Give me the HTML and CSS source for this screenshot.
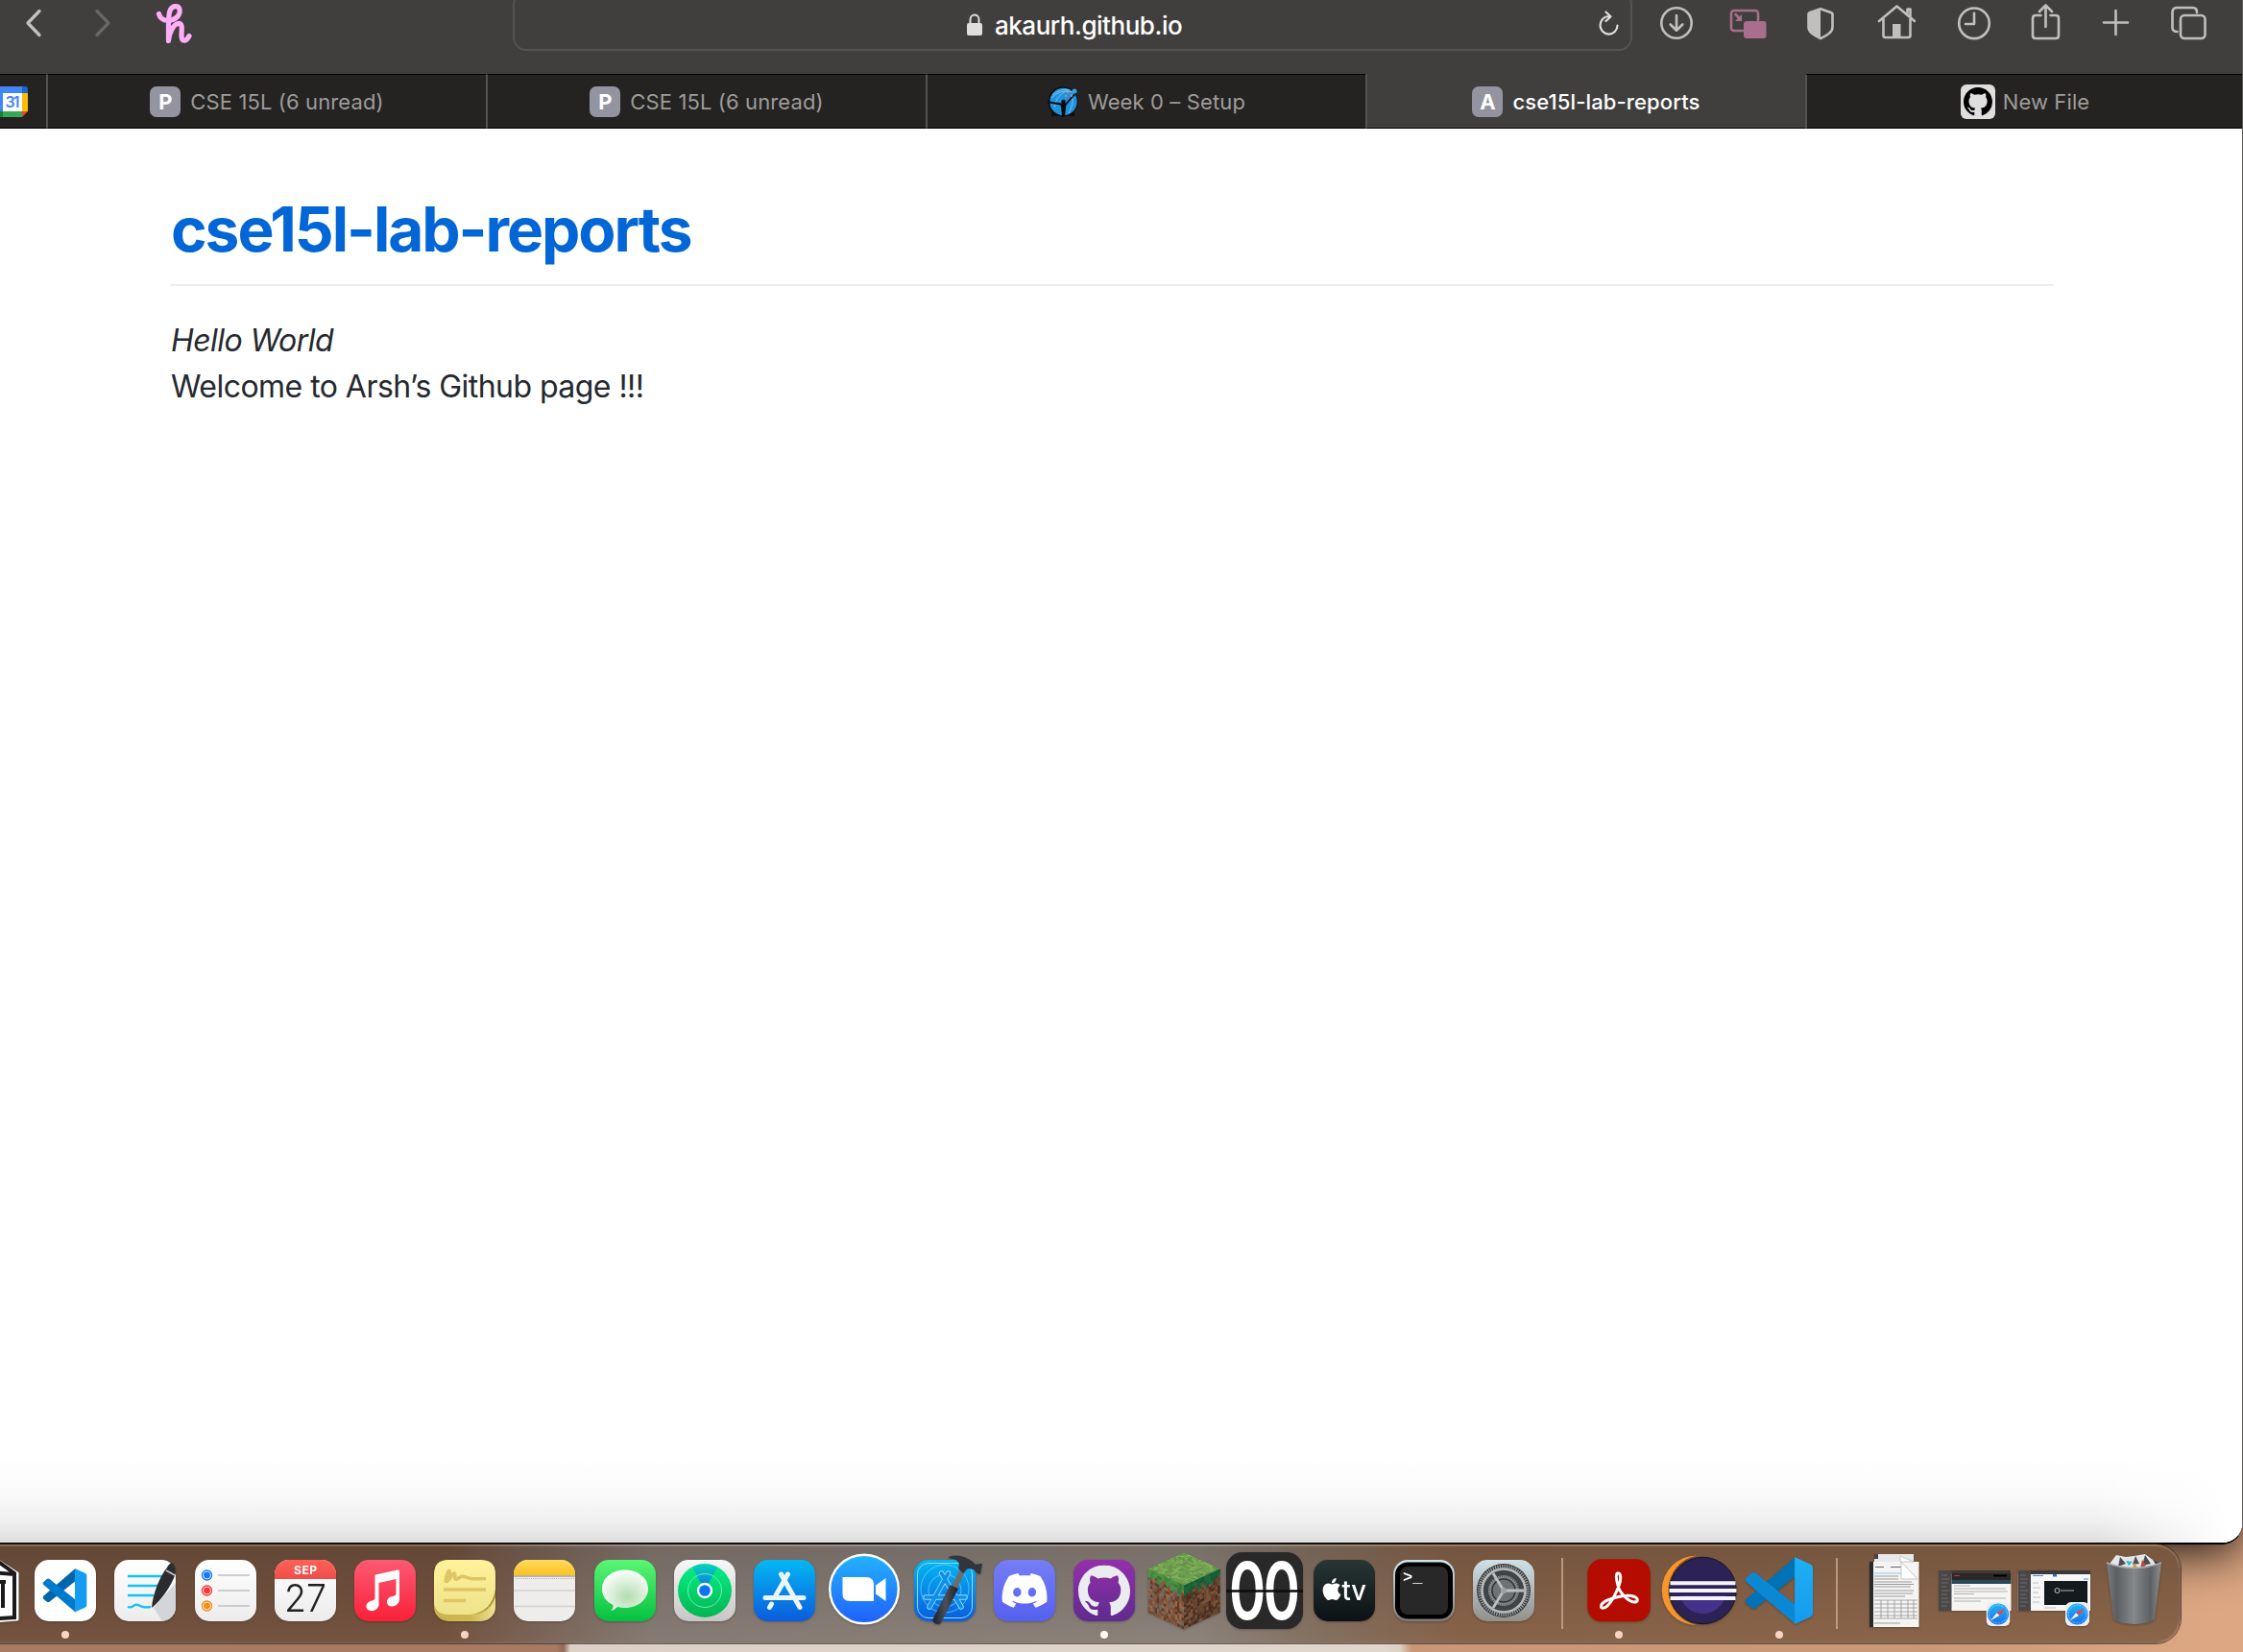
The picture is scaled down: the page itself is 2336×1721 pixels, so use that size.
FILE: index.html
```html
<!DOCTYPE html>
<html lang="en">
<head>
<meta charset="utf-8">
<title>cse15l-lab-reports</title>
<link rel="stylesheet" href="styles.css">
</head>
<body>
<svg class="defs" width="0" height="0">
  <defs>
    <symbol id="octocat" viewBox="0 0 16 16"><path d="M8 0C3.58 0 0 3.58 0 8c0 3.54 2.29 6.53 5.47 7.59.4.07.55-.17.55-.38 0-.19-.01-.82-.01-1.49-2.01.37-2.53-.49-2.69-.94-.09-.23-.48-.94-.82-1.13-.28-.15-.68-.52-.01-.53.63-.01 1.08.58 1.23.82.72 1.21 1.87.87 2.33.66.07-.52.28-.87.51-1.07-1.78-.2-3.64-.89-3.64-3.95 0-.87.31-1.59.82-2.15-.08-.2-.36-1.02.08-2.12 0 0 .67-.21 2.2.82.64-.18 1.32-.27 2-.27.68 0 1.36.09 2 .27 1.53-1.04 2.2-.82 2.2-.82.44 1.1.16 1.92.08 2.12.51.56.82 1.27.82 2.15 0 3.07-1.87 3.75-3.65 3.95.29.25.54.73.54 1.48 0 1.07-.01 1.93-.01 2.2 0 .21.15.46.55.38A8.013 8.013 0 0016 8c0-4.42-3.58-8-8-8z"/></symbol>
    <symbol id="safari" viewBox="0 0 24 24"><rect width="24" height="24" rx="5.5" fill="#eceef0"/><circle cx="12" cy="12" r="10.6" fill="url(#g-safari)"/><circle cx="12" cy="12" r="9" fill="none" stroke="#bfe4ff" stroke-width="1" stroke-dasharray=".5 1"/><path d="M19.5 5.5 13.4 13.4 10.6 10.8z" fill="#f4403a"/><path d="M4.5 18.5 10.6 10.8 13.4 13.4z" fill="#f2f2f2"/></symbol>
    <linearGradient id="g-safari" x2="0" y2="1"><stop stop-color="#1fb6fa"/><stop offset="1" stop-color="#1b70ea"/></linearGradient>
    <linearGradient id="g-paper" x2="0" y2="1"><stop stop-color="#fff"/><stop offset="1" stop-color="#ececec"/></linearGradient>
    <linearGradient id="g-cal" x2="0" y2="1"><stop stop-color="#ff6058"/><stop offset="1" stop-color="#ee4e48"/></linearGradient>
    <linearGradient id="g-music" x2="0" y2="1"><stop stop-color="#fc5a73"/><stop offset="1" stop-color="#fa2038"/></linearGradient>
    <linearGradient id="g-sticky" x2="0" y2="1"><stop stop-color="#fff29a"/><stop offset="1" stop-color="#ede38a"/></linearGradient>
    <linearGradient id="g-sticky2"><stop stop-color="#c9b44a"/><stop offset=".6" stop-color="#cdb950"/><stop offset="1" stop-color="#efe292"/></linearGradient>
    <linearGradient id="g-notes" x2="0" y2="1"><stop stop-color="#ffdb5c"/><stop offset="1" stop-color="#fdc021"/></linearGradient>
    <linearGradient id="g-msg" x2="0" y2="1"><stop stop-color="#5bf675"/><stop offset="1" stop-color="#04c13f"/></linearGradient>
    <radialGradient id="g-bubble" cx=".55" cy=".65" r=".65"><stop stop-color="#b4dcb0"/><stop offset="1" stop-color="#fdfffd"/></radialGradient>
    <linearGradient id="g-silver" x2="0" y2="1"><stop stop-color="#f8f8f8"/><stop offset="1" stop-color="#c8c6c5"/></linearGradient>
    <linearGradient id="g-find" x2="0" y2="1"><stop stop-color="#04f088"/><stop offset="1" stop-color="#04b552"/></linearGradient>
    <linearGradient id="g-beam" x2="0" y2="1"><stop stop-color="#08d7b4"/><stop offset="1" stop-color="#0668f6"/></linearGradient>
    <linearGradient id="g-store" x2="0" y2="1"><stop stop-color="#04b8f3"/><stop offset="1" stop-color="#0a5cdc"/></linearGradient>
    <linearGradient id="g-zoom" x2="0" y2="1"><stop stop-color="#23b3ff"/><stop offset="1" stop-color="#2060fb"/></linearGradient>
    <linearGradient id="g-discord" x2="0" y2="1"><stop stop-color="#757ef6"/><stop offset="1" stop-color="#5560f0"/></linearGradient>
    <linearGradient id="g-github" x2="0" y2="1"><stop stop-color="#9430ab"/><stop offset="1" stop-color="#5f2b8e"/></linearGradient>
    <linearGradient id="g-tv" x2="0" y2="1"><stop stop-color="#283634"/><stop offset="1" stop-color="#0c1115"/></linearGradient>
    <linearGradient id="g-term" x2="0" y2="1"><stop stop-color="#d2e6ef"/><stop offset="1" stop-color="#7d7b7c"/></linearGradient>
    <linearGradient id="g-gear" x2="0" y2="1"><stop stop-color="#d0e0e8"/><stop offset="1" stop-color="#929089"/></linearGradient>
    <linearGradient id="g-code" x2="0" y2="1"><stop stop-color="#1fb0f2"/><stop offset="1" stop-color="#149af0"/></linearGradient>
    <linearGradient id="g-bin"><stop stop-color="#7b7e80"/><stop offset=".18" stop-color="#5b5f62"/><stop offset=".5" stop-color="#84888a"/><stop offset=".8" stop-color="#5d6164"/><stop offset="1" stop-color="#8c8f91"/></linearGradient>
    <linearGradient id="g-handle"><stop stop-color="#1d2026"/><stop offset=".5" stop-color="#4a4f59"/><stop offset="1" stop-color="#1d2026"/></linearGradient>
    <clipPath id="tile"><rect x="8" y="8" width="64" height="64" rx="15"/></clipPath>
  </defs>
</svg>

<main class="window">
  <header class="toolbar">
    <svg class="nav back" width="20" height="32" viewBox="0 0 20 32"><path d="M16 3.500 4 16l12 12.500"/></svg>
    <svg class="nav forward" width="20" height="32" viewBox="0 0 20 32"><path d="M4 3.500 16 16 4 28.500"/></svg>
    <svg class="honey" width="40" height="44" viewBox="0 0 40 44"><path d="M4.500 11.500C6 18 13 19.500 19 17.500 25 15.500 27 10 26 6.500 25 2.500 19 2.500 16.500 7 14.500 11 14.500 17 14.500 24V39.500C15 33 19 22.500 24.500 21.500 30 21 28 29 28 34 28 41 33 40.500 36 34.500"/></svg>
    <div class="address">
      <svg class="lock" width="18" height="26" viewBox="0 0 18 26"><path d="M4.500 12V7.500a4.500 5 0 0 1 9 0V12" fill="none" stroke="#dededd" stroke-width="2"/><rect x="1" y="11" width="16" height="13" rx="2" fill="#dededd"/></svg>
      <span class="url">akaurh.github.io</span>
      <svg class="reload" width="26" height="28" viewBox="0 0 26 28"><path d="M13.500 6A9 9.300 0 1 0 22.500 15.500M10.500 1.500 15.500 6.200 10.500 11"/></svg>
    </div>
    <div class="actions">
      <svg class="a1" viewBox="0 0 40 40"><circle cx="20" cy="20" r="15.700"/><path d="M20 12v15M13.700 21.500 20 27.700l6.300-6.200"/></svg>
      <svg class="a2 pip" viewBox="0 0 40 40"><path d="M14 28H5a3 3 0 0 1-3-3V10a3 3 0 0 1 3-3h22a3 3 0 0 1 3 3v7M6.500 11l5 5"/><path class="solid" d="M13 11v7H6z"/><rect class="solid" x="15" y="18" width="23.500" height="18" rx="3"/></svg>
      <svg class="a3" viewBox="0 0 40 40"><path d="M20 5.200 31.500 9.300q1 .3 1 1.500V24c0 5-4 8-12.500 12C11.500 32 7.500 29 7.500 24V10.800q0-1.200 1-1.500z"/><path class="solid" d="M20 5.200V36C11.500 32 7.500 29 7.500 24V10.800q0-1.200 1-1.500z"/></svg>
      <svg class="a4" viewBox="0 0 40 40"><path d="M2 18 20.500 2.500 39 18M6.500 16v17q0 2 2 2h24q2 0 2-2V16M31.500 11V5.500h3V14"/><path class="solid" d="M16 21h8.500v14h-8.500z"/></svg>
      <svg class="a5" viewBox="0 0 40 40"><circle cx="20" cy="20.300" r="15.800"/><path d="M20 9.700V21H11"/></svg>
      <svg class="a6" viewBox="0 0 40 40"><path d="M14.500 12H9q-3 0-3 3v18q0 3 3 3h21q3 0 3-3V15q0-3-3-3H24.500M19.500 24V2M13 8 19.500 1.500 26 8"/></svg>
      <svg class="a7" viewBox="0 0 40 40"><path d="M19.500 7v25M7 19.500h25"/></svg>
      <svg class="a8" viewBox="0 0 40 40"><rect x="12" y="12" width="25.500" height="24" rx="4"/><path d="M8.500 29q-5 0-5-4V8.500q0-4.500 5-4.500h16q4.500 0 4.500 5"/></svg>
    </div>
  </header>

  <nav class="tabs">
    <div class="tab pinned">
      <svg width="29" height="32" viewBox="0 0 29 32"><path fill="#4285f4" d="M0 0h23v7H0z"/><path fill="#1967d2" d="M23 0h3q3 0 3 3v4h-6z"/><path fill="#fbbc04" d="M23 7h6v19h-6z"/><path fill="#34a853" d="M0 26h23v6H0z"/><path fill="#188038" d="M0 26h3v6H0z"/><path fill="#4285f4" d="M0 7h3v19H0z"/><path fill="#fff" d="M3 7h20v19H3z"/><path fill="#ea4335" d="M23 26h6l-6 6z"/><text x="5.500" y="22.300" class="cal31" textLength="15">31</text></svg>
    </div>
    <div class="tab"><span class="letter">P</span><span class="label">CSE 15L (6 unread)</span></div>
    <div class="tab"><span class="letter">P</span><span class="label">CSE 15L (6 unread)</span></div>
    <div class="tab">
      <svg width="32" height="32" viewBox="0 0 32 32"><circle cx="16" cy="16" r="15.700" fill="#0b0f13"/><path d="M4 25h24v6H4z" fill="#0b0f13"/><circle cx="16.500" cy="16" r="14.200" fill="#2192dc"/><path d="M4 12Q14 2 27 6M5 9q10-8 18-5M7 22Q8 10 21 4M22 28q6-10 3-20" fill="none" stroke="#76c3f0" stroke-width="1"/><path d="M1.500 16.500 14 18.500 19 18.500 27.500 9" fill="none" stroke="#080b0e" stroke-width="1.800" stroke-linecap="round"/><circle cx="16.500" cy="16" r="2.300" fill="#080b0e"/><path d="M13.500 18h6l-1.500 13h-3z" fill="#080b0e"/><circle cx="28" cy="5" r="2.500" fill="#36a3e4"/><g fill="#e88468"><circle cx="21" cy="6" r="1"/><circle cx="19" cy="10" r="1"/><circle cx="25" cy="10" r="1"/></g></svg>
      <span class="label">Week 0 – Setup</span></div>
    <div class="tab active"><span class="letter">A</span><span class="label">cse15l-lab-reports</span></div>
    <div class="tab file"><span class="ghbox"><svg width="30" height="30"><use href="#octocat"/></svg></span><span class="label">New File</span></div>
  </nav>

  <article class="page">
    <h1><a>cse15l-lab-reports</a></h1>
    <p><em>Hello World</em><br>Welcome to Arsh’s Github page !!!</p>
  </article>
</main>

<footer class="dock">
  <div class="slot"><svg viewBox="0 0 80 80"><path d="M8 20 50 7 73 22V70L20 74z" fill="#fff" stroke="#fff" stroke-width="3" stroke-linejoin="round"/><path d="M20 14 52 9 70 22V68L20 71M54 10 44 21 70 23M44 21H20M58 31V58M53 31h8" fill="none" stroke="#1b1b1b" stroke-width="4"/></svg></div>
  <div class="slot run"><svg viewBox="0 0 80 80"><rect x="8" y="8" width="64" height="64" rx="15" fill="#fff"/><g transform="translate(16.700 17) scale(.456)"><path fill="#0065a9" d="M74 0 75 28 15 76q-3 2-6 0L1 69q-2-3 0-6z"/><path fill="#007acc" d="M74 100 75 72 15 24q-3-2-6 0L1 31q-2 3 0 6z"/><path fill="#149cf0" d="M73 0 97 11q3 2 3 5V84q0 3-3 5L73 100z"/></g></svg></div>
  <div class="slot"><svg viewBox="0 0 80 80"><rect x="8" y="8" width="64" height="64" rx="15" fill="url(#g-paper)"/><path d="M49 58 72 32v26q0 14-14 14z" fill="#d3d6d8" clip-path="url(#tile)"/><path d="M22 25h37M22 35h31M22 45h27M22 57c5 2 7-4 11-2s5 3 13 2" fill="none" stroke="#13c2f5" stroke-width="2.300"/><path d="M47 58c1-14 8-32 16-42q3-6 6-4 3 3 3 10C67 36 57 50 47 58z" fill="#2b2c2e"/><path d="m62 19 9 5" stroke="#bfc2c5" stroke-width="2"/></svg></div>
  <div class="slot"><svg viewBox="0 0 80 80"><rect x="8" y="8" width="64" height="64" rx="15" fill="url(#g-paper)"/><path d="M32 24h33M32 40h33M32 56h33" stroke="#bfc0c3" stroke-width="1.600"/><g stroke-width="1.400" fill="#fff"><circle cx="20.500" cy="24" r="5" stroke="#1579f2"/><circle cx="20.500" cy="40" r="5" stroke="#f33a35"/><circle cx="20.500" cy="56" r="5" stroke="#f38c1b"/></g><circle cx="20.500" cy="24" r="3.400" fill="#1579f2"/><circle cx="20.500" cy="40" r="3.400" fill="#f33a35"/><circle cx="20.500" cy="56" r="3.400" fill="#f38c1b"/></svg></div>
  <div class="slot"><svg viewBox="0 0 80 80"><rect x="8" y="8" width="64" height="64" rx="15" fill="url(#g-paper)"/><path d="M8 8h64v20H8z" fill="url(#g-cal)" clip-path="url(#tile)"/><text x="28" y="23" class="sep-text" textLength="24">SEP</text><text x="18" y="62" class="day" textLength="44" lengthAdjust="spacingAndGlyphs">27</text></svg></div>
  <div class="slot"><svg viewBox="0 0 80 80"><rect x="8" y="8" width="64" height="64" rx="15" fill="url(#g-music)"/><path d="M30 23.500 53 18.500q2-.5 2 1.500V49c0 4-3 7-7.500 7.500-3 .3-5.500-1.500-5.500-4.500 0-4 3-5.500 6-6 2.500-.5 3.500-1 3.500-3.500V28L33.500 32V54c0 4-3 7-7.500 7.200-3 0-5.500-1.700-5.500-4.700 0-3.500 3-5.200 6-6 2.500-.5 3-1.500 3-3.500V25.500q0-1.500.5-2z" fill="#fff"/></svg></div>
  <div class="slot run"><svg viewBox="0 0 80 80"><rect x="8" y="12" width="64" height="60" rx="15" fill="url(#g-sticky2)"/><path d="M23 8h34q15 0 15 15v15C70 54 62 63 45 65H23q-15 0-15-15V23Q8 8 23 8z" fill="url(#g-sticky)"/><path d="M48 65C63 62 70 52 72 38v9C68 58 60 64 48 65z" fill="#a99536"/><path d="M20 27c7-5 4-11 2-5s-3 11 1 7c3-3 4-7 6-7s-1 8 3 6 4-4 9-2 6 2 21 1.500M18 39h44M18 50.500h23" fill="none" stroke="#dfc566" stroke-width="3.500"/></svg></div>
  <div class="slot"><svg viewBox="0 0 80 80"><rect x="8" y="8" width="64" height="64" rx="15" fill="#efedeb"/><path d="M8 8h64v16H8z" fill="url(#g-notes)" clip-path="url(#tile)"/><path d="M8 25h64" stroke="#a5a39d" stroke-width="1.400"/><path d="M10 27.500h62" stroke="#b8b6b2" stroke-width="1" stroke-dasharray="1 1"/><path d="M8 40h64M8 56.500h64" stroke="#d3d2d2" stroke-width="1.500"/></svg></div>
  <div class="slot"><svg viewBox="0 0 80 80"><rect x="8" y="8" width="64" height="64" rx="15" fill="url(#g-msg)"/><path d="M40 18.500c13.500 0 24 8.500 24 19.500S53.500 58 40 58q-4 0-8-1-3 3.500-7 4 3-2.500 2.500-6C20 51.500 16 45.500 16 38c0-11 10.500-19.500 24-19.500z" fill="url(#g-bubble)"/></svg></div>
  <div class="slot"><svg viewBox="0 0 80 80"><rect x="8" y="8" width="64" height="64" rx="15" fill="url(#g-silver)"/><circle cx="40" cy="40" r="28" fill="url(#g-find)"/><path d="M40 40 27 15.500Q40 9 53 15.500z" fill="url(#g-beam)"/><circle cx="40" cy="40" r="17.500" fill="none" stroke="#6cf0b0" stroke-width="1"/><circle cx="40" cy="40" r="7" fill="#0b74f2" stroke="#fff" stroke-width="2.300"/></svg></div>
  <div class="slot"><svg viewBox="0 0 80 80"><rect x="8" y="8" width="64" height="64" rx="15" fill="url(#g-store)"/><path d="M43.500 23 31 45M36.500 23 56 57.500M26.500 54l-2 3.500M20 47.500h40" stroke="#edf5fc" stroke-width="5" stroke-linecap="round"/></svg></div>
  <div class="slot"><svg viewBox="0 0 80 80"><circle cx="40" cy="38.500" r="35.800" fill="url(#g-zoom)" stroke="#fff" stroke-width="2.400"/><path d="M17.500 26H42q8 0 8 7.500V51H25q-7.500 0-7.500-7zM52 34.500 62.500 27v24L52 43.500z" fill="#fff"/></svg></div>
  <div class="slot"><svg viewBox="0 0 80 80"><rect x="8" y="8" width="64" height="64" rx="15" fill="url(#g-store)"/><g fill="none" stroke="#8fdcff"><rect x="11.500" y="11.500" width="57" height="57" rx="11.500"/><circle cx="40" cy="38" r="25" stroke-width=".6"/><circle cx="40" cy="40" r="17" stroke-width=".6"/><path d="M43.500 22 24 57M36.500 22 57 57M20 47h41" stroke-width="5.500" stroke-linecap="round"/></g><path d="M43.500 22 24 57M36.500 22 57 57M20 47h41" stroke="#0f8fea" stroke-width="3.700" stroke-linecap="round"/><path d="M56 17 61 20 53 38 47 36z" fill="#6b6d72"/><path d="M45.500 34 54 38 36 74q-3 3-8-1-1-2 0-4z" fill="url(#g-handle)"/><path d="M44 5q10-4 22 3 4 2 6 5 3-1 7-1l-2 11q-5-1-7-5l-6-1-5 5-5-5Q58 8 44 6z" fill="#33353b"/></svg></div>
  <div class="slot"><svg viewBox="0 0 80 80"><rect x="8" y="8" width="64" height="64" rx="15" fill="url(#g-discord)"/><path transform="translate(16.700 16.500) scale(1.950)" fill="#fff" d="M20.317 4.370a19.791 19.791 0 00-4.885-1.515.074.074 0 00-.079.037c-.211.375-.445.865-.608 1.250-1.845-.276-3.680-.276-5.487 0-.164-.393-.406-.874-.618-1.250a.077.077 0 00-.079-.037 19.736 19.736 0 00-4.885 1.515.070.070 0 00-.032.028C.533 9.046-.319 13.580.099 18.058a.082.082 0 00.031.056c2.053 1.508 4.041 2.423 5.993 3.029a.078.078 0 00.084-.028c.462-.630.873-1.295 1.226-1.994a.076.076 0 00-.042-.106c-.653-.248-1.274-.550-1.872-.892a.077.077 0 01-.008-.128c.126-.094.252-.192.372-.291a.074.074 0 01.078-.011c3.928 1.793 8.180 1.793 12.061 0a.074.074 0 01.079.010c.120.099.246.198.373.292a.077.077 0 01-.007.128 12.299 12.299 0 01-1.873.891.077.077 0 00-.041.107c.360.698.772 1.363 1.225 1.993a.076.076 0 00.084.029c1.961-.607 3.950-1.522 6.002-3.029a.077.077 0 00.031-.055c.500-5.177-.838-9.674-3.549-13.660a.061.061 0 00-.031-.029zM8.020 15.331c-1.183 0-2.157-1.086-2.157-2.419s.956-2.419 2.157-2.419c1.211 0 2.176 1.095 2.157 2.419 0 1.333-.956 2.419-2.157 2.419zm7.975 0c-1.183 0-2.157-1.086-2.157-2.419s.955-2.419 2.157-2.419c1.211 0 2.176 1.095 2.157 2.419 0 1.333-.946 2.419-2.157 2.419z"/></svg></div>
  <div class="slot run bright"><svg viewBox="0 0 80 80"><rect x="8" y="8" width="64" height="64" rx="15" fill="url(#g-github)"/><use href="#octocat" x="13" y="13.500" width="54" height="54" fill="#ebecf0"/></svg></div>
  <div class="slot"><svg id="block" viewBox="0 0 80 80"></svg></div>
  <div class="slot"><svg viewBox="0 0 80 80"><rect width="80" height="80" rx="17" fill="#292929"/><text class="flip" transform="translate(3 70.300) scale(.700 1)" textLength="106">00</text><path d="M0 40.500h80" stroke="#0c0c0c" stroke-width="2.400"/></svg></div>
  <div class="slot"><svg viewBox="0 0 80 80"><rect x="8" y="8" width="64" height="64" rx="15" fill="url(#g-tv)"/><path transform="translate(15.500 27) scale(.960)" fill="#fff" d="M12.152 6.896c-.948 0-2.415-1.078-3.960-1.040-2.040.027-3.910 1.183-4.961 3.014-2.117 3.675-.546 9.103 1.519 12.090 1.013 1.454 2.208 3.090 3.792 3.039 1.520-.065 2.090-.987 3.935-.987 1.831 0 2.350.987 3.960.948 1.637-.026 2.676-1.480 3.676-2.948 1.156-1.688 1.636-3.325 1.662-3.415-.039-.013-3.182-1.221-3.220-4.857-.026-3.040 2.480-4.494 2.597-4.559-1.429-2.090-3.623-2.324-4.390-2.376-2-.156-3.675 1.090-4.610 1.090zM15.530 3.830c.843-1.012 1.400-2.427 1.245-3.830-1.207.052-2.662.805-3.532 1.818-.780.896-1.454 2.338-1.273 3.714 1.338.104 2.715-.688 3.559-1.701"/><text x="37.500" y="50" class="tv" textLength="25.500" lengthAdjust="spacingAndGlyphs">tv</text></svg></div>
  <div class="slot"><svg viewBox="0 0 80 80"><rect x="8" y="8" width="64" height="64" rx="15" fill="url(#g-term)"/><rect x="10" y="10.500" width="60" height="59" rx="13" fill="#000"/><rect x="15" y="15" width="50" height="50" rx="8" fill="#282828"/><text x="18" y="31" class="prompt">&gt;_</text></svg></div>
  <div class="slot"><svg viewBox="0 0 80 80"><rect x="8" y="8" width="64" height="64" rx="15" fill="url(#g-gear)"/><circle cx="40" cy="40" r="28" fill="#34383a"/><circle cx="40" cy="40" r="25" fill="none" stroke="#9da1a2" stroke-width="4" stroke-dasharray="1.200 1.200"/><circle cx="40" cy="40" r="22.500" fill="#3f4446" stroke="#b7bbbc" stroke-width="2.600"/><circle cx="40" cy="40" r="14.500" fill="#676b6c" stroke="#909495" stroke-width="3" stroke-dasharray="1.500 .8"/><circle cx="40" cy="40" r="12" fill="#6f7273" stroke="#303436" stroke-width="1.500"/><path d="M40 40H61M40 40 29 22M40 40 29 58" stroke="#bcc0c1" stroke-width="2.800"/><circle cx="40" cy="40" r="3" fill="#a0a3a4"/></svg></div>
  <div class="divider"></div>
  <div class="slot run"><svg viewBox="0 0 80 80"><rect x="7.300" y="7.300" width="65.500" height="65" rx="15" fill="#b50c02"/><path d="M38.500 22c4-1 4 7 1.500 13-3 8-8 17-12 21-3 3-7 3-6.500 0 .5-4 8-7 16-9 7-2 15-2 19-.5 4 2 3.500 5.500-.5 5.500-5 0-12-7-15-12-3-6-5-17-2.500-18z" fill="none" stroke="#fff" stroke-width="3"/></svg></div>
  <div class="slot"><svg viewBox="0 0 80 80"><path d="M38 3.500a36 36 0 1 0 0 72.500A37 37 0 0 1 38 3.500z" fill="#f8952a"/><circle cx="44.500" cy="40" r="34.700" fill="#2c2255" stroke="#17131f" stroke-width="1"/><path d="M21 45a24 24 0 0 0 47 0z" fill="#44328a"/><path d="M10.500 32.300h68M9.500 40h70M10.500 48h68" stroke="#f5f4f8" stroke-width="4"/></svg></div>
  <div class="slot run"><svg viewBox="0 0 80 80"><g transform="translate(5 5) scale(.700)"><path fill="#0072b5" d="M74 0 75 28 15 76q-3 2-6 0L1 69q-2-3 0-6z"/><path fill="#0a88d4" d="M74 100 75 72 15 24q-3-2-6 0L1 31q-2 3 0 6z"/><path fill="url(#g-code)" d="M73 0 97 11q3 2 3 5V84q0 3-3 5L73 100z"/></g></svg></div>
  <div class="divider"></div>
  <div class="slot"><svg viewBox="0 0 80 80"><path d="M19 2h41v12H19z" fill="#e9e9e9"/><path d="M19 2h4v5h-4z" fill="#444"/><path d="M14 10h51.500v68H14z" fill="#f4f4f4"/><path d="M14 10h4v68h-4z" fill="#2a2a2a"/><path d="M20 15.500h9M36 15.500h11" stroke="#666"/><path d="M19 22h28" stroke="#9fc7e8"/><path d="M19 25h25M19 28h25M19 31h39M19 33.500h41M19 36h38M19 40h41M19 43h40M19 46h32M19 74h27" stroke="#9a9a9a" stroke-width="1.200"/><path d="M19 50h45M19 54h45M19 58h45M19 62h45M19 66h45M19 69h45M26 50v19M33 50v19M40 50v19M47 50v19M54 50v19M60 50v19" stroke="#888" stroke-width=".7"/><path d="M46 4 60 10H46zM47 10 64 28H47z" fill="#fff" stroke="#c6c6c6"/></svg></div>
  <div class="slot"><svg viewBox="0 0 80 80"><path d="M3 19h75.500v42H3z" fill="#f6f5f2"/><path d="M3 19h75.500v3.500H3z" fill="#3c3a39"/><path d="M3 19h13.500v42H3z" fill="#4a4847"/><path d="M16.500 22h62v7h-62z" fill="#2b2827"/><path d="M16.500 29h62v4h-62z" fill="#28485c"/><path d="M19 24.500h6" stroke="#b33"/><path d="M60 24.500h14" stroke="#000" stroke-width="2"/><path d="M19 35h17M19 38h54M19 41h56M19 43.500h21M19 48h54M19 51h28" stroke="#aaa" stroke-width=".9"/><path d="M6 24h6M6 28h8M6 32h7M6 36h5M6 40h8M6 44h6M6 48h7M6 52h8M6 56h6" stroke="#74777b" stroke-width=".8"/><use href="#safari" x="52.500" y="52" width="25" height="25"/></svg></div>
  <div class="slot"><svg viewBox="0 0 80 80"><path d="M2.500 19H78v42H2.500z" fill="#f7f7f8"/><path d="M2.500 19H78v4H2.500z" fill="#3c3a39"/><path d="M2.500 19H16v42H2.500z" fill="#4a4847"/><path d="M18 24.500h11M71 28h5" stroke="#4d8be2"/><path d="M39 23h4v2.500h-4z" fill="#2468dc"/><path d="M30 30h45v25H30z" fill="#151a1f"/><circle cx="43.500" cy="40" r="2.500" fill="none" stroke="#eee" stroke-width=".8"/><path d="M47 40h14" stroke="#ddd" stroke-width=".8"/><path d="M18 32h6M18 37h8M18 42h6M18 47h8M18 52h7M30 58h12" stroke="#b4b7bc" stroke-width=".9"/><path d="M5 24h6M5 28h8M5 32h7M5 36h5M5 40h8M5 44h6M5 48h7M5 52h8M5 56h6" stroke="#74777b" stroke-width=".8"/><use href="#safari" x="52" y="52" width="25" height="25"/></svg></div>
  <div class="slot"><svg viewBox="0 0 80 80"><ellipse cx="40.500" cy="13" rx="28" ry="6" fill="#3d4042"/><path d="M15 12 22 3l10 2 8-1 12-2 8 6 4 6-14 6H30z" fill="#e4e5e6"/><path d="m26 5 6 7-8 3zM42 4l-3 9 7-1zM52 3l6 9-9 2z" fill="#4a4d50"/><path d="m32 9 7 1-4 4z" fill="#25bdd0"/><path d="m49 8 4 6-6 3z" fill="#c94728"/><path d="m41 11 3 5-6 2z" fill="#d89a36"/><path d="M12 11q28 11 57 0L62 69q-2 5-21 6-20-1-22-6z" fill="url(#g-bin)"/><path d="M12 11q28 11 57 0" fill="none" stroke="#a6a9ab" stroke-width="1.500"/></svg></div>
</footer>
<script src="block.js"></script>
</body>
</html>
```
FILE: block.js
```js
// Paints the pixelated faces of the grass block icon.
const svg = document.getElementById('block');
let seed = 7;
const rand = () => (seed = (seed * 16807) % 2147483647) / 2147483647;
const pick = list => list[Math.floor(rand() * list.length)];
const grass = ['#78ae54', '#6da24c', '#83bb5d', '#649846', '#72a950'];

function face(matrix, dirt, edge) {
  let cells = '';
  for (let x = 0; x < 16; x++) {
    const depth = 2 + Math.floor(rand() * 3);
    for (let y = 0; y < 16; y++) {
      const fill = !dirt ? pick(grass) : y < depth ? pick(edge) : pick(dirt);
      cells += `<rect x="${x}" y="${y}" width="1.06" height="1.06" fill="${fill}"/>`;
    }
  }
  return `<g transform="matrix(${matrix})">${cells}</g>`;
}

svg.innerHTML =
  face('2.344 -1.063 2.344 1.094 2.7 17.3') +
  face('2.331 1.094 0 2.830 2.7 17.3', ['#8a5a3c', '#754a32', '#9b6a49', '#5d3a28', '#7d5238', '#6d6a68'], ['#3f8a3a', '#347a35', '#4b9742']) +
  face('2.344 -1.094 0 2.830 40 34.8', ['#6b452e', '#533322', '#7d5439', '#432a1d', '#5f3d29'], ['#0e6138', '#125a33', '#1a6b3a']);
```
FILE: styles.css
```css
* { box-sizing: border-box; }

body {
  margin: 0;
  width: 2336px;
  height: 1721px;
  overflow: hidden;
  display: flex;
  flex-direction: column;
  font-family: Inter, "Liberation Sans", sans-serif;
  background: linear-gradient(90deg, #a77c63 0, #a77a61 580px, #8f6a58 587px, #ddd1c7 594px, #e0d6cb 1440px, #ddd1c5 1458px, #c99777 1470px, #c99877 2000px, #dda783 2300px);
}

.defs { position: absolute; }

.window {
  width: 2336px;
  height: 1609px;
  flex: none;
  display: flex;
  flex-direction: column;
  overflow: hidden;
  background: #fff;
  border-right: 1px solid #5d5c5b;
  border-bottom: 2px solid #000;
  border-bottom-right-radius: 22px;
  box-shadow: 0 10px 50px rgba(0, 0, 0, .85);
}

.toolbar {
  height: 77px;
  flex: none;
  display: flex;
  align-items: flex-start;
  background: #403f3d;
}

.nav { margin-top: 8px; fill: none; stroke-width: 3.3; stroke-linecap: round; stroke-linejoin: round; }
.back { margin-left: 25px; stroke: #c3c2c1; }
.forward { margin-left: 52px; stroke: #686765; }
.honey { margin: 3px 0 0 44px; fill: none; stroke: #ffaef8; stroke-width: 5.2; stroke-linecap: round; stroke-linejoin: round; }

.address {
  width: 1166px;
  height: 62px;
  margin: -9px 0 0 333px;
  padding: 9px 10px 0 470px;
  display: flex;
  align-items: center;
  border: 2px solid #545351;
  border-radius: 14px;
}
.url { margin: 0 auto 0 12px; font-size: 26px; line-height: 36px; font-weight: 500; letter-spacing: -.47px; color: #fff; white-space: nowrap; }
.lock { margin-top: -1px; }
.reload { fill: none; stroke: #dededd; stroke-width: 2.2; stroke-linecap: round; stroke-linejoin: round; margin-top: -4px; }

.actions { display: flex; margin: 4px 0 0 26px; }
.actions svg { width: 40px; height: 40px; fill: none; stroke: #c0bfbd; stroke-width: 2.6; stroke-linecap: round; stroke-linejoin: round; }
.actions .solid { fill: #c0bfbd; stroke: none; }
.actions .pip { stroke: #a86e8b; }
.actions .pip .solid { fill: #a86e8b; }
.a2, .a3 { margin-left: 35px; }
.a4 { margin-left: 39px; }
.a5 { margin-left: 41px; }
.a6 { margin-left: 35px; }
.a7 { margin-left: 33px; }
.a8 { margin-left: 35px; }

.tabs { height: 57px; flex: none; display: flex; background: #242321; }
.tab {
  width: 458px;
  display: flex;
  align-items: center;
  justify-content: center;
  gap: 10px;
  flex: none;
  border-top: 1px solid #000;
  border-bottom: 1px solid #000;
  border-left: 2px solid #535250;
  color: #9d9c9a;
  white-space: nowrap;
}
.tab.pinned { width: 48px; border-left: 0; justify-content: flex-start; }
.tab.active { background: #403f3d; border-top-color: #403f3d; color: #fff; font-weight: 500; }
.tab.file { gap: 8px; padding-right: 2px; }
.label { font-size: 22px; line-height: 30px; letter-spacing: .12px; }
.letter {
  width: 32px;
  height: 32px;
  border-radius: 7px;
  background: #9493a0;
  color: #fff;
  font-size: 22px;
  line-height: 32px;
  font-weight: 700;
  text-align: center;
}
.ghbox { width: 36px; height: 36px; border-radius: 6px; background: #dedede; display: grid; place-items: center; }
.cal31 { font-size: 16px; font-weight: 600; fill: #4285f4; }

.page {
  flex: 1;
  padding: 65px 197px 0 178px;
  color: #24292e;
  background:
    linear-gradient(90deg, transparent 2180px, #fff 2320px) bottom / 100% 90px no-repeat,
    linear-gradient(#fff 0, #fafafa 45%, #efefef 75%, #dedede 100%) bottom / 100% 90px no-repeat,
    #fff;
}
h1 { margin: 0 0 33px; height: 99px; border-bottom: 2px solid #eaecef; font-size: 64px; line-height: 80px; font-weight: 700; letter-spacing: -2.05px; }
h1 a { color: #0366d6; }
p { margin: 0; font-size: 32px; line-height: 48px; letter-spacing: -.54px; }

.dock {
  position: relative;
  width: 2271px;
  height: 103px;
  flex: none;
  display: flex;
  padding-top: 6px;
  border: 2px solid rgba(255, 255, 255, .13);
  border-left: 0;
  border-radius: 0 26px 26px 0;
  box-shadow: 0 0 0 1px rgba(60, 40, 30, .7);
  background:
    linear-gradient(rgba(0, 0, 0, .14), transparent),
    linear-gradient(90deg, #74533f 0, #74533f 460px, #867b74 680px, #8b827a 1250px, #85705f 1380px, #886349 1520px, #8b6549 2271px);
  background-clip: border-box;
}
.slot { width: 83.24px; flex: none; display: flex; flex-direction: column; align-items: center; gap: 2px; }
.slot:first-child { margin-left: -56.8px; }
.slot svg { width: 80px; height: 80px; flex: none; overflow: visible; filter: drop-shadow(0 1px 1px rgba(0, 0, 0, .25)); }
.run::after { content: ""; width: 8px; height: 8px; border-radius: 50%; background: #f7d5c0; }
.bright::after { background: #fffaf2; }
.divider { width: 2px; height: 74px; margin: 6px 16.5px 0 18.2px; flex: none; background: #b99880; }

.sep-text { font-size: 12px; font-weight: 700; fill: #fff; }
.day { font-size: 39px; font-weight: 300; fill: #222; }
.flip { font-size: 83px; font-weight: 600; fill: #fff; }
.tv { font-size: 28px; font-weight: 500; fill: #fff; }
.prompt { font: 700 17px "Liberation Mono", monospace; fill: #fff; }
```
